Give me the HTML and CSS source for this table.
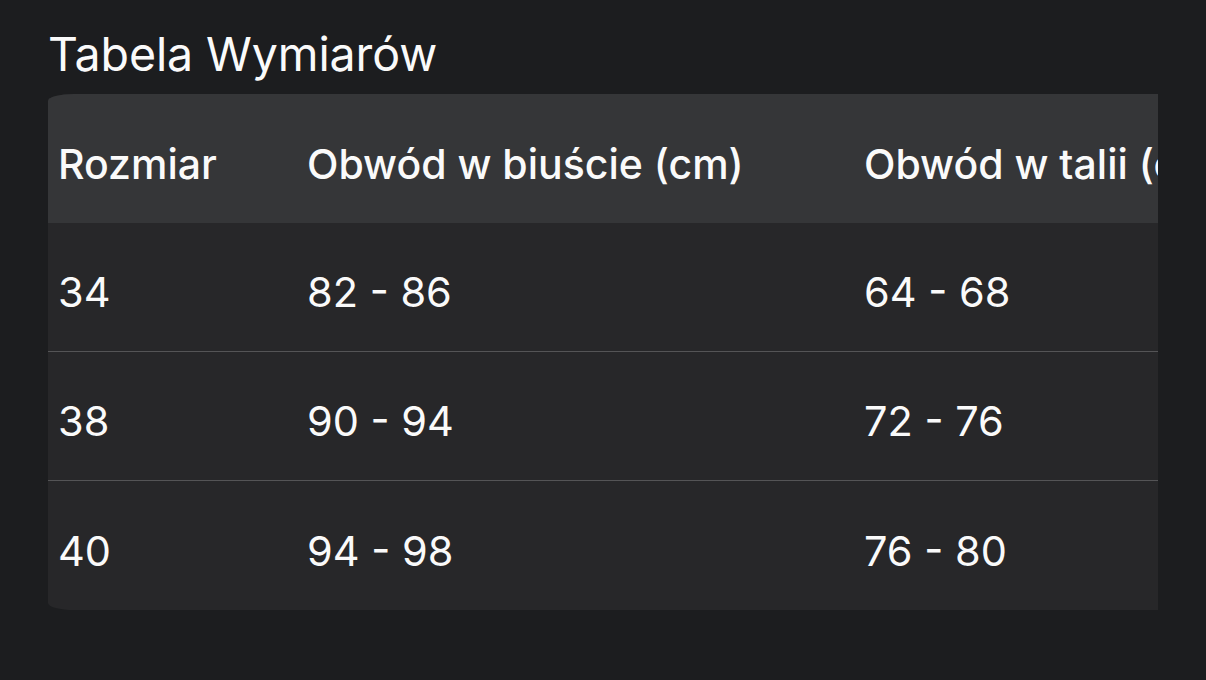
FILE: index.html
```html
<!DOCTYPE html>
<html lang="pl">
<head>
<meta charset="utf-8">
<title>Tabela Wymiarów</title>
<link rel="stylesheet" href="styles.css">
</head>
<body>
<main class="page">
  <h1 class="title">Tabela Wymiarów</h1>
  <div class="scroll">
    <table class="sizes">
      <thead>
        <tr>
          <th class="c1">Rozmiar</th>
          <th class="c2">Obwód w biuście (cm)</th>
          <th class="c3">Obwód w talii (cm)</th>
          <th class="c4">Obwód w biodrach (cm)</th>
        </tr>
      </thead>
      <tbody>
        <tr><td>34</td><td>82 - 86</td><td>64 - 68</td><td>90 - 94</td></tr>
        <tr><td>38</td><td>90 - 94</td><td>72 - 76</td><td>98 - 102</td></tr>
        <tr><td>40</td><td>94 - 98</td><td>76 - 80</td><td>102 - 106</td></tr>
      </tbody>
    </table>
  </div>
</main>
</body>
</html>
```
FILE: styles.css
```css
html, body {
  margin: 0;
  padding: 0;
  background: #1c1d1f;
}
body {
  width: 1206px;
  height: 680px;
  overflow: hidden;
  font-family: "Inter", "Noto Sans", sans-serif;
  color: #fafafa;
}
.page {
  padding: 15px 0 0 48px;
}
.title {
  margin: 0;
  font-size: 46.5px;
  font-weight: 400;
  line-height: 79px;
  height: 79px;
  letter-spacing: -0.1px;
}
.scroll {
  width: 1110px;
  overflow: hidden;
}
.sizes {
  border-collapse: separate;
  border-spacing: 0;
  width: 1700px;
  table-layout: fixed;
  border-radius: 26px / 7px;
  overflow: hidden;
  background: #272729;
}
.sizes th, .sizes td {
  text-align: left;
  padding: 10px 0 0 10px;
  font-size: 41.5px;
  font-weight: 400;
  white-space: nowrap;
  vertical-align: middle;
}
.sizes th {
  background: #353638;
  height: 119px;
  font-weight: 500;
  font-size: 41px;
}
.c1 { width: 239px; }
.c2 { width: 547px; }
.c3 { width: 450px; }
.c4 { width: 454px; }
.sizes td {
  height: 118px;
}
.sizes tbody tr + tr td {
  border-top: 1px solid #545456;
}
.sizes tbody tr:last-child td {
  height: 119px;
}
```
